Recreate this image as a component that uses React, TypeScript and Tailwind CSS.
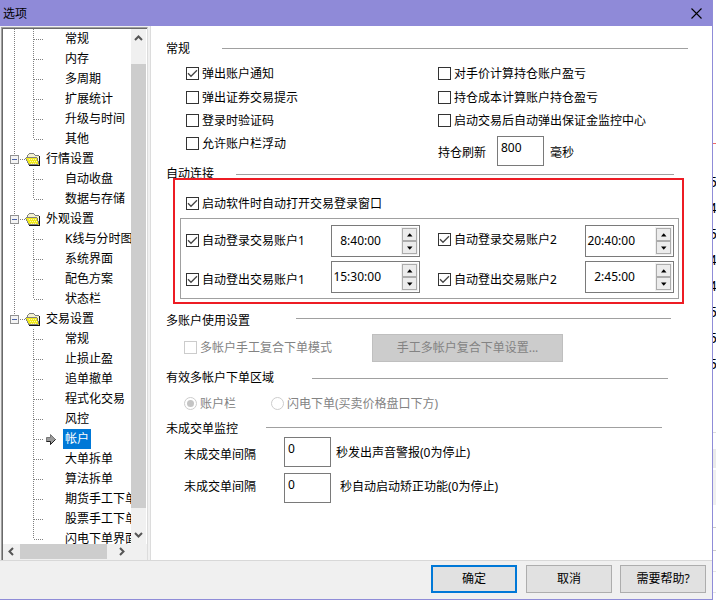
import React from "react";

const FONT = "font-['Noto_Sans','Noto_Sans_CJK_SC',sans-serif]";

type Item = { label: string; parent?: boolean; last?: boolean; selected?: boolean; root?: "through" | "end" };

const items: Item[] = [
  { label: "常规", root: "through" },
  { label: "内存", root: "through" },
  { label: "多周期", root: "through" },
  { label: "扩展统计", root: "through" },
  { label: "升级与时间", root: "through" },
  { label: "其他", last: true, root: "through" },
  { label: "行情设置", parent: true, root: "through" },
  { label: "自动收盘", root: "through" },
  { label: "数据与存储", last: true, root: "through" },
  { label: "外观设置", parent: true, root: "through" },
  { label: "K线与分时图", root: "through" },
  { label: "系统界面", root: "through" },
  { label: "配色方案", root: "through" },
  { label: "状态栏", last: true, root: "through" },
  { label: "交易设置", parent: true, root: "end" },
  { label: "常规" },
  { label: "止损止盈" },
  { label: "追单撤单" },
  { label: "程式化交易" },
  { label: "风控" },
  { label: "帐户", selected: true },
  { label: "大单拆单" },
  { label: "算法拆单" },
  { label: "期货手工下单" },
  { label: "股票手工下单" },
  { label: "闪电下单界面", last: true },
];

function Folder() {
  return (
    <svg className="block" width="16" height="13" viewBox="0 0 16 13" shapeRendering="crispEdges">
      <path d="M4 0h5v1h1v1h4v3H3V1h1z" fill="#f4f2cf" />
      <path d="M4 0h5v1H4zM3 1h1v1H3zM2 2h1v3H2zM9 1h1v1H9zM10 2h4v1h-4z" fill="#808080" />
      <path d="M1 5h11v2h1v3h1v2H4v-2H3V8H2V6H1z" fill="#f2ea1c" />
      <path d="M4 6h1v1H4zM6 6h1v1H6zM8 6h1v1H8zM10 6h1v1h-1zM5 8h1v1H5zM7 8h1v1H7zM9 8h1v1H9zM11 8h1v1h-1zM6 10h1v1H6zM8 10h1v1H8zM10 10h1v1h-1z" fill="#fbf8b0" />
      <path d="M0 5h1v1H0zM1 4h11v1H1zM1 6h1v2H1zM2 8h1v2H2zM3 10h1v2H3zM12 5h1v3h-1zM13 8h1v3h-1zM4 11h9v1H4z" fill="#808080" />
      <path d="M14 3h1v10H4v-1h10z" fill="#111" />
    </svg>
  );
}

function PointArrow() {
  return (
    <svg width="10" height="11" viewBox="0 0 10 11">
      <path d="M.5 3.500h4v-3l5 5-5 5v-3h-4z" fill="#9a9a9a" stroke="#777" />
      <path d="M.5 7.500h4v3l5-5" fill="none" stroke="#222" />
    </svg>
  );
}

function TreeGuides({ item }: { item: Item }) {
  return (
    <svg className="shrink-0" width="42" height="20" shapeRendering="crispEdges">
      <g stroke="#808080" strokeDasharray="1 1">
        {item.root && <path d={item.root === "end" ? "M11.500 0V10" : "M11.500 0V20"} />}
        {!item.parent && <path d={item.last ? "M30.500 0V10" : "M30.500 0V20"} />}
        {!item.parent && <path d="M31 10.500H41" />}
        {item.parent && <path d="M17 10.500H22" />}
      </g>
      {item.parent && (
        <>
          <rect x="7.500" y="6.500" width="8" height="8" fill="#f4f4f4" stroke="#919191" />
          <path d="M9 10.500h5" stroke="#4b63a7" />
        </>
      )}
    </svg>
  );
}

function Tree() {
  return (
    <div className="ml-[1px] mt-[1px] flex h-[534px] w-[147px] shrink-0 flex-col border-b border-l border-r border-t border-[#a0a0a0] border-b-[#dcdcdc] border-r-[#dcdcdc] bg-white">
      <div className="flex h-full flex-col border-l border-t border-[#696969]">
        <div className="flex h-[515px]">
          <div className="w-[128px] overflow-hidden">
            {items.map((it, i) => (
              <div key={i} className="flex h-5 w-[180px] items-center">
                <TreeGuides item={it} />
                {it.parent ? (
                  <>
                    <span className="-ml-[20px] w-[18px]"><Folder /></span>
                    <span className="ml-[3px] leading-5">{it.label}</span>
                  </>
                ) : (
                  <>
                    <span className="w-[18px] pl-[1px]">{it.selected && <PointArrow />}</span>
                    <span className={"h-5 px-[2px] leading-[19px] " + (it.selected ? "bg-[#0078d7] text-white" : "")}>{it.label}</span>
                  </>
                )}
              </div>
            ))}
          </div>
          <div className="flex w-[15px] flex-col items-center bg-[#f0f0f0]">
            <svg width="15" height="35"><path d="M4 11l3.500-3.500L11 11" fill="none" stroke="#555" strokeWidth="2" /></svg>
            <div className="h-[444px] w-full bg-[#cdcdcd]" />
            <svg width="15" height="36"><path d="M4 25l3.500 3.500L11 25" fill="none" stroke="#555" strokeWidth="2" /></svg>
          </div>
        </div>
        <div className="flex h-4 bg-[#f0f0f0]">
          <svg width="17" height="15"><path d="M10 4L6.500 7.500 10 11" fill="none" stroke="#555" strokeWidth="2" /></svg>
          <div className="h-[15px] w-[87px] bg-[#cdcdcd]" />
          <svg width="24" height="15"><path d="M13 4l3.500 3.500L13 11" fill="none" stroke="#555" strokeWidth="2" /></svg>
        </div>
      </div>
    </div>
  );
}

function Check({ label, checked, disabled, className = "" }: { label: string; checked?: boolean; disabled?: boolean; className?: string }) {
  return (
    <div className={"flex h-[13px] items-center gap-[3px] whitespace-nowrap " + className}>
      <svg width="13" height="13">
        <rect x=".5" y=".5" width="12" height="12" fill="#fff" stroke={disabled ? "#ccc" : "#333"} />
        {checked && <path d="M2 6.300L5 9.300 11 3.300" fill="none" stroke="#444" strokeWidth="1.300" />}
      </svg>
      <span className={disabled ? "text-[#838383]" : ""}>{label}</span>
    </div>
  );
}

function Radio({ label, checked, className = "" }: { label: string; checked?: boolean; className?: string }) {
  return (
    <div className={"flex h-[13px] items-center gap-[3px] whitespace-nowrap text-[#838383] " + className}>
      <svg width="13" height="13">
        <circle cx="6.500" cy="6.500" r="6" fill="#fff" stroke="#ccc" />
        {checked && <circle cx="6.500" cy="6.500" r="3.500" fill="#c4c4c4" />}
      </svg>
      <span>{label}</span>
    </div>
  );
}

function Heading({ label, className, line }: { label: string; className: string; line: string }) {
  return (
    <div className={"ml-[15px] flex h-4 whitespace-nowrap leading-4 " + className}>
      <span>{label}</span>
      <i className={"h-px bg-[#a0a0a0] " + line} />
    </div>
  );
}

function NumberBox({ value }: { value: string }) {
  return <div className="h-[30px] w-[47px] shrink-0 border border-[#7a7a7a] bg-white pl-[3px] pt-[3px] leading-4">{value}</div>;
}

function TimeBox({ value }: { value: string }) {
  return (
    <div className="flex h-8 w-[89px] shrink-0 justify-between border border-[#7a7a7a] bg-white py-[1px] pr-[1px]">
      <span className="w-[49px] whitespace-nowrap text-right leading-[28px]">{value}</span>
      <div className="flex w-[17px] flex-col items-center bg-[#f0f0f0] pt-[1px]">
        {["M4 7.500h5.500L6.750 4.200z", "M4 4.500h5.500L6.750 7.800z"].map((d) => (
          <svg key={d} className="h-[13px] w-[15px] border border-[#acacac] bg-[#ececec]" viewBox="0 0 13 11">
            <path d={d} fill="#000" />
          </svg>
        ))}
      </div>
    </div>
  );
}

function Settings() {
  return (
    <main className="ml-[2px] flex h-[534px] w-[562px] flex-col border-l border-[#dcdcdc] bg-white">
      <Heading label="常规" className="mt-[15px]" line="ml-[32px] mt-[7px] w-[466px]" />
      <div className="flex h-[110px]">
        <div className="ml-[35px] w-[252px] pt-[10px]">
          <Check checked label="弹出账户通知" />
          <Check className="mt-[11px]" label="弹出证券交易提示" />
          <Check className="mt-[10px]" label="登录时验证码" />
          <Check className="mt-[10px]" label="允许账户栏浮动" />
        </div>
        <div className="pt-[10px]">
          <Check label="对手价计算持仓账户盈亏" />
          <Check className="mt-[11px]" label="持仓成本计算账户持仓盈亏" />
          <Check className="mt-[10px]" label="启动交易后自动弹出保证金监控中心" />
          <div className="mt-[9px] flex">
            <span className="mt-[9px] w-[59px] leading-4">持仓刷新</span>
            <NumberBox value="800" />
            <span className="ml-[6px] mt-[9px] leading-4">毫秒</span>
          </div>
        </div>
      </div>
      <Heading label="自动连接" className="-mt-px" line="ml-[22px] mt-[8px] w-[438px]" />
      <section className="z-10 ml-[22px] -mt-[4px] h-[126px] w-[511px] border-2 border-[#ed1c24] px-[5px] pt-[17px]">
        <Check checked className="ml-[6px]" label="启动软件时自动打开交易登录窗口" />
        <div className="mt-[8px] flex h-[81px] w-[499px] flex-col gap-1 border border-[#a0a0a0] pl-[5px] pt-[6px]">
          <div className="flex h-8">
            <Check checked className="mt-[9px] w-[145px]" label="自动登录交易账户1" />
            <TimeBox value="8:40:00" />
            <Check checked className="ml-[18px] mt-[8px] w-[147px]" label="自动登录交易账户2" />
            <TimeBox value="20:40:00" />
          </div>
          <div className="flex h-8">
            <Check checked className="mt-[12px] w-[145px]" label="自动登出交易账户1" />
            <TimeBox value="15:30:00" />
            <Check checked className="ml-[18px] mt-[12px] w-[147px]" label="自动登出交易账户2" />
            <TimeBox value="2:45:00" />
          </div>
        </div>
      </section>
      <Heading label="多账户使用设置" className="mt-[9px]" line="ml-[46px] mt-[5px] w-[375px]" />
      <div className="ml-[33px] mt-[5px] flex h-7 items-start">
        <Check disabled className="mt-[7px] w-[188px]" label="多帐户手工复合下单模式" />
        <button className="h-7 w-[191px] border border-[#bfbfbf] bg-[#ccc] text-[#838383]">手工多帐户复合下单设置...</button>
      </div>
      <Heading label="有效多帐户下单区域" className="mt-[8px]" line="ml-[38px] mt-[8px] w-[356px]" />
      <div className="ml-[33px] mt-[11px] flex">
        <Radio checked className="w-[87px]" label="账户栏" />
        <Radio label="闪电下单(买卖价格盘口下方)" />
      </div>
      <Heading label="未成交单监控" className="mt-[11px]" line="ml-[28px] mt-[6px] w-[396px]" />
      <div className="ml-[33px] flex h-9 whitespace-nowrap leading-4">
        <span className="mt-[10px] w-[100px]">未成交单间隔</span>
        <NumberBox value="0" />
        <span className="ml-[5px] mt-[8px]">秒发出声音警报(0为停止)</span>
      </div>
      <div className="ml-[33px] flex h-9 whitespace-nowrap leading-4">
        <span className="mt-[6px] w-[100px]">未成交单间隔</span>
        <NumberBox value="0" />
        <span className="ml-[9px] mt-[6px]">秒自动启动矫正功能(0为停止)</span>
      </div>
    </main>
  );
}

function Backdrop() {
  const rows = ["5", "4", "5", "4", "4", "5", "5", "5"];
  return (
    <div className="flex h-[600px] w-[3px] flex-col overflow-hidden bg-white">
      <div className="mt-[143px] h-px shrink-0 bg-[#f06a6a]" />
      <div className="mt-[25px] font-['Liberation_Sans',sans-serif] text-[14px]">
        {rows.map((r, i) => (
          <div key={i} className="-ml-[4px] h-[26px] leading-[26px]">{r}</div>
        ))}
      </div>
      <div className="mt-[55px] h-px shrink-0 bg-[#ddd]" />
      <div className="mt-[16px] h-[19px] shrink-0 bg-[#ebebeb]" />
      <div className="mt-[2px] h-[35px] shrink-0 bg-[#f0f0f0]" />
      <div className="mt-[22px] h-px shrink-0 bg-[#ccc]" />
      <div className="mt-[22px] h-px shrink-0 bg-[#ccc]" />
      <div className="mt-[20px] h-px shrink-0 bg-[#e5e5e5]" />
      <div className="mt-[20px] h-px shrink-0 bg-[#e5e5e5]" />
    </div>
  );
}

export default function App() {
  return (
    <div className={"flex h-[600px] w-[716px] overflow-hidden bg-white text-[12px] text-black " + FONT}>
      <div className="flex h-[600px] w-[713px] shrink-0 flex-col border-b border-r border-[#8f8cd8] bg-[#f0f0f0]">
        <header className="flex h-[26px] shrink-0 items-center justify-between bg-[#8f8ad8] pl-[3px] pr-[10px]">
          <span className="pt-px">选项</span>
          <svg width="11" height="11"><path d="M.5 .5l10 10M10.500 .5l-10 10" stroke="#000" strokeWidth="1.100" /></svg>
        </header>
        <div className="flex h-[534px] shrink-0">
          <Tree />
          <Settings />
        </div>
        <footer className="flex h-[39px] justify-end border-t border-[#d8d8d8] pr-[6px] pt-[4px]">
          <button className="h-7 w-[86px] border-2 border-[#0078d7] bg-[#e1e1e1]">确定</button>
          <button className="ml-[9px] h-7 w-[86px] border border-[#adadad] bg-[#e1e1e1]">取消</button>
          <button className="ml-[8px] h-7 w-[86px] border border-[#adadad] bg-[#e1e1e1]">需要帮助?</button>
        </footer>
      </div>
      <Backdrop />
    </div>
  );
}
